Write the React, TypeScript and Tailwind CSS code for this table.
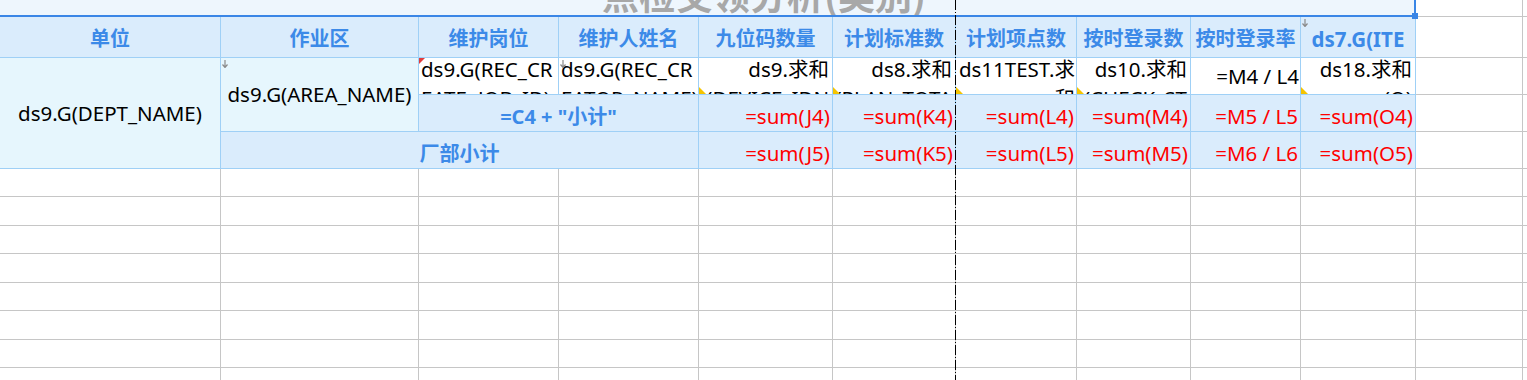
import React from "react";

const TB = "border-r border-b border-[#9fd0f6]";
const GB = "border-r border-b border-[#c6c6c6]";

function DownMark() {
  return (
    <svg className="absolute left-[1px] top-[2px]" width="6" height="8" viewBox="0 0 6 8">
      <path d="M3 0 V7 M0.5 4.5 L3 7.5 L5.5 4.5" stroke="#8a8a8a" strokeWidth="1.2" fill="none" />
    </svg>
  );
}

function YellowTri() {
  return (
    <svg className="absolute left-0 bottom-0" width="7" height="7" viewBox="0 0 7 7">
      <polygon points="0,0 7,7 0,7" fill="#f5c400" />
    </svg>
  );
}

function RedTri() {
  return (
    <svg className="absolute left-0 top-0" width="6" height="6" viewBox="0 0 6 6">
      <polygon points="0,0 6,0 0,6" fill="#e23b3b" />
    </svg>
  );
}

const headers = ["单位", "作业区", "维护岗位", "维护人姓名", "九位码数量", "计划标准数", "计划项点数", "按时登录数", "按时登录率"];

const sub1 = ["=sum(J4)", "=sum(K4)", "=sum(L4)", "=sum(M4)", "=M5 / L5", "=sum(O4)"];
const sub2 = ["=sum(J5)", "=sum(K5)", "=sum(L5)", "=sum(M5)", "=M6 / L6", "=sum(O5)"];

function WrapCell({
  text,
  align,
  tri,
  red,
  tight,
}: {
  text: string;
  align: "left" | "right";
  tri?: boolean;
  red?: boolean;
  tight?: boolean;
}) {
  const cls =
    align === "left"
      ? "mt-[-3px] pl-[2px] pr-0 text-left leading-[29px] [overflow-wrap:anywhere]"
      : tight
      ? "mt-[-3px] pl-0 pr-[1px] text-right leading-[29px] [overflow-wrap:anywhere]"
      : "mt-[-3px] pl-[1px] pr-[3px] text-right leading-[29px] [overflow-wrap:anywhere]";
  return (
    <div className={`relative overflow-hidden bg-white ${TB}`}>
      <div className={cls}>{text}</div>
      {tri && <YellowTri />}
      {red && <RedTri />}
      {align === "left" && !red && <DownMark />}
    </div>
  );
}

export default function App() {
  return (
    <div className="relative h-[380px] w-[1527px] overflow-hidden bg-white text-[20.5px] text-black font-['Noto_Sans','Noto_Sans_CJK_SC',sans-serif]">
      <div className="grid grid-cols-[221px_198px_140px_140px_134px_123px_121px_114px_110px_115px_107px_1fr] grid-rows-[17px_41px_37px_37px_37px_28px_29px_28px_29px_28px_29px_28px_29px]">
        {/* title row */}
        <div className="col-span-10 flex items-end justify-center overflow-hidden border-r-2 border-b-2 border-[#3a86e6] bg-[#eef6fd] pl-[114px]">
          <span className="mb-[2px] whitespace-nowrap text-[37px] font-bold leading-none text-[#a8a8a8] font-['Noto_Sans_CJK_SC',sans-serif]">
            点检交领分析(类别)
          </span>
        </div>
        <div className={GB} />
        <div className="border-b border-[#c6c6c6]" />

        {/* header row */}
        {headers.map((h) => (
          <div
            key={h}
            className={`flex items-center justify-center overflow-hidden bg-[#daecfc] pt-[4px] text-[20px] font-bold text-[#3c8ae8] ${TB}`}
          >
            {h}
          </div>
        ))}
        <div className={`relative flex items-center justify-center overflow-hidden bg-[#daecfc] px-[9px] pt-[4px] text-[20.5px] font-bold text-[#3c8ae8] ${TB}`}>
          <div className="h-[28px] w-full overflow-hidden text-center leading-[28px] [overflow-wrap:anywhere]">ds7.G(ITEM_NAME)</div>
          <DownMark />
        </div>
        <div className={GB} />
        <div className="border-b border-[#c6c6c6]" />

        {/* data row */}
        <div className={`row-span-3 flex items-center justify-center bg-[#e6f6fd] whitespace-nowrap ${TB}`}>ds9.G(DEPT_NAME)</div>
        <div className={`relative row-span-2 flex items-center justify-center bg-[#e6f6fd] whitespace-nowrap ${TB}`}>
          ds9.G(AREA_NAME)
          <DownMark />
        </div>
        <WrapCell text="ds9.G(REC_CREATE_JOB_ID)" align="left" red />
        <WrapCell text="ds9.G(REC_CREATOR_NAME)" align="left" />
        <WrapCell text="ds9.求和(DEVICE_IDNO)" align="right" tri />
        <WrapCell text="ds8.求和(PLAN_TOTAL)" align="right" tri />
        <WrapCell text="ds11TEST.求和" align="right" tri tight />
        <WrapCell text="ds10.求和(CHECK_STATUS)" align="right" tri />
        <div className={`flex items-center justify-end overflow-hidden whitespace-nowrap bg-white pr-[1px] ${TB}`}>=M4 / L4</div>
        <WrapCell text="ds18.求和(O)" align="right" tri />
        <div className={GB} />
        <div className="border-b border-[#c6c6c6]" />

        {/* subtotal row */}
        <div className={`col-span-2 flex items-center justify-center bg-[#daecfc] pt-[7px] text-[20px] font-bold text-[#3c8ae8] ${TB}`}>=C4 + "小计"</div>
        {sub1.map((s) => (
          <div key={s} className={`flex items-center justify-end overflow-hidden whitespace-nowrap bg-[#daecfc] pt-[7px] pr-[2px] text-[#ff0000] ${TB}`}>
            {s}
          </div>
        ))}
        <div className={GB} />
        <div className="border-b border-[#c6c6c6]" />

        {/* factory row */}
        <div className={`col-span-3 flex items-center justify-center bg-[#daecfc] pt-[7px] text-[20px] font-bold text-[#3c8ae8] ${TB}`}>厂部小计</div>
        {sub2.map((s) => (
          <div key={s} className={`flex items-center justify-end overflow-hidden whitespace-nowrap bg-[#daecfc] pt-[7px] pr-[2px] text-[#ff0000] ${TB}`}>
            {s}
          </div>
        ))}
        <div className={GB} />
        <div className="border-b border-[#c6c6c6]" />

        {/* empty rows */}
        {Array.from({ length: 8 }).map((_, r) => (
          <React.Fragment key={r}>
            {Array.from({ length: 11 }).map((__, c) => (
              <div key={c} className={GB} />
            ))}
            <div className="border-b border-[#c6c6c6]" />
          </React.Fragment>
        ))}
      </div>

      {/* page break line */}
      <div className="absolute left-[955px] top-0 h-[380px] w-px bg-[repeating-linear-gradient(to_bottom,#000_0px,#000_10px,transparent_10px,transparent_12px,#000_12px,#000_13px,transparent_13px,transparent_15px)]" />
      {/* selection handle */}
      <div className="absolute left-[1412px] top-[13px] h-[6px] w-[6px] bg-[#3a86e6]" />
    </div>
  );
}
